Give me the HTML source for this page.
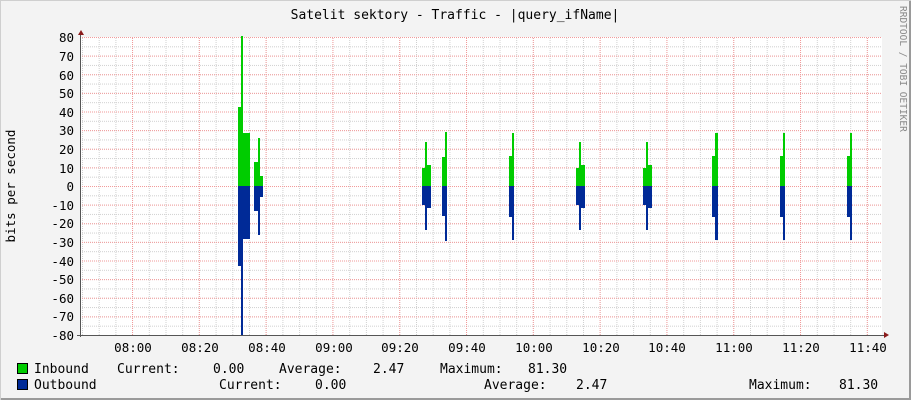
<!DOCTYPE html>
<html><head><meta charset="utf-8"><style>
html,body{margin:0;padding:0;background:#f3f3f3}
svg{display:block}
text{font-family:"DejaVu Sans Mono","Liberation Mono",monospace}
</style></head><body>
<svg width="911" height="400" viewBox="0 0 911 400" xmlns="http://www.w3.org/2000/svg">
<defs>
<pattern id="vmin" patternUnits="userSpaceOnUse" x="82" y="0" width="16.7" height="2"><rect x="0" y="0" width="1" height="1" fill="#d0d0d0"/></pattern>
<pattern id="hmin" patternUnits="userSpaceOnUse" x="0" y="37" width="2" height="9.3125"><rect x="0" y="0" width="1" height="1" fill="#d0d0d0"/></pattern>
<pattern id="vmaj" patternUnits="userSpaceOnUse" x="132" y="0" width="66.8" height="2"><rect x="0" y="0" width="1" height="1" fill="#f29a9a"/></pattern>
<pattern id="hmaj" patternUnits="userSpaceOnUse" x="0" y="37" width="2" height="18.625"><rect x="0" y="0" width="1" height="1" fill="#f29a9a"/></pattern>
</defs>
<rect x="0" y="0" width="911" height="400" fill="#f3f3f3"/>
<rect x="0" y="398" width="911" height="2" fill="#9a9a9a"/>
<rect x="909" y="0" width="2" height="400" fill="#9a9a9a"/>
<rect x="0" y="0" width="911" height="1" fill="#cfcfcf"/>
<rect x="0" y="0" width="1" height="400" fill="#cfcfcf"/>
<text x="455" y="19" font-size="13" text-anchor="middle" fill="#000">Satelit sektory - Traffic - |query_ifName|</text>
<text transform="translate(900,6) rotate(90)" font-size="9.5" fill="#8a8a8a">RRDTOOL / TOBI OETIKER</text>
<rect x="81" y="37" width="801" height="299" fill="#fff"/>
<rect x="81" y="37" width="801" height="299" fill="url(#vmin)"/>
<rect x="81" y="37" width="801" height="299" fill="url(#hmin)"/>
<rect x="81" y="37" width="801" height="299" fill="url(#vmaj)"/>
<rect x="81" y="37" width="801" height="299" fill="url(#hmaj)"/>
<g fill="#00cc00">
<rect x="238" y="107" width="3" height="79"/><rect x="241" y="36" width="2" height="150"/><rect x="243" y="133" width="7" height="53"/>
<rect x="254" y="162" width="4" height="24"/><rect x="258" y="138" width="2" height="48"/><rect x="260" y="176" width="3" height="10"/>
<rect x="422" y="168" width="3" height="18"/><rect x="425" y="142" width="2" height="44"/><rect x="427" y="165" width="4" height="21"/>
<rect x="576" y="168" width="3" height="18"/><rect x="579" y="142" width="2" height="44"/><rect x="581" y="165" width="4" height="21"/>
<rect x="643" y="168" width="3" height="18"/><rect x="646" y="142" width="2" height="44"/><rect x="648" y="165" width="4" height="21"/>
<rect x="442" y="157" width="3" height="29"/><rect x="445" y="132" width="2" height="54"/>
<rect x="509" y="156" width="3" height="30"/><rect x="512" y="133" width="2" height="53"/>
<rect x="712" y="156" width="3" height="30"/><rect x="715" y="133" width="3" height="53"/>
<rect x="780" y="156" width="3" height="30"/><rect x="783" y="133" width="2" height="53"/>
<rect x="847" y="156" width="3" height="30"/><rect x="850" y="133" width="2" height="53"/>
</g>
<g fill="#002a97">
<rect x="238" y="186" width="3" height="80"/><rect x="241" y="186" width="2" height="150"/><rect x="243" y="186" width="7" height="53"/>
<rect x="254" y="186" width="4" height="25"/><rect x="258" y="186" width="2" height="49"/><rect x="260" y="186" width="3" height="11"/>
<rect x="422" y="186" width="3" height="19"/><rect x="425" y="186" width="2" height="44"/><rect x="427" y="186" width="4" height="22"/>
<rect x="576" y="186" width="3" height="19"/><rect x="579" y="186" width="2" height="44"/><rect x="581" y="186" width="4" height="22"/>
<rect x="643" y="186" width="3" height="19"/><rect x="646" y="186" width="2" height="44"/><rect x="648" y="186" width="4" height="22"/>
<rect x="442" y="186" width="3" height="30"/><rect x="445" y="186" width="2" height="55"/>
<rect x="509" y="186" width="3" height="31"/><rect x="512" y="186" width="2" height="54"/>
<rect x="712" y="186" width="3" height="31"/><rect x="715" y="186" width="3" height="54"/>
<rect x="780" y="186" width="3" height="31"/><rect x="783" y="186" width="2" height="54"/>
<rect x="847" y="186" width="3" height="31"/><rect x="850" y="186" width="2" height="54"/>
</g>
<rect x="80" y="35" width="1" height="302" fill="#555"/>
<rect x="77" y="335" width="807" height="1" fill="#555"/>
<polygon points="78,35 84,35 81,30" fill="#8b1a1a"/>
<polygon points="884,332 884,338 889,335" fill="#8b1a1a"/>
<g font-size="12.5" fill="#000" text-anchor="end">
<text x="74" y="42">80</text><text x="74" y="61">70</text><text x="74" y="80">60</text><text x="74" y="98">50</text><text x="74" y="117">40</text><text x="74" y="135">30</text><text x="74" y="154">20</text><text x="74" y="173">10</text><text x="74" y="191">0</text><text x="74" y="210">-10</text><text x="74" y="228">-20</text><text x="74" y="247">-30</text><text x="74" y="266">-40</text><text x="74" y="284">-50</text><text x="74" y="303">-60</text><text x="74" y="321">-70</text><text x="74" y="340">-80</text>
</g>
<text transform="translate(15,186) rotate(-90)" font-size="12.5" text-anchor="middle" fill="#000">bits per second</text>
<g font-size="12.5" fill="#000" text-anchor="middle">
<text x="133" y="352">08:00</text><text x="200" y="352">08:20</text><text x="267" y="352">08:40</text><text x="334" y="352">09:00</text><text x="400" y="352">09:20</text><text x="467" y="352">09:40</text><text x="534" y="352">10:00</text><text x="601" y="352">10:20</text><text x="667" y="352">10:40</text><text x="734" y="352">11:00</text><text x="801" y="352">11:20</text><text x="868" y="352">11:40</text>
</g>
<rect x="17.5" y="363.5" width="10" height="10" fill="#00cc00" stroke="#000"/>
<rect x="17.5" y="379.5" width="10" height="10" fill="#002a97" stroke="#000"/>
<g font-size="13" fill="#000">
<text x="34" y="373">Inbound</text><text x="117" y="373">Current:</text><text x="213" y="373">0.00</text><text x="279" y="373">Average:</text><text x="373" y="373">2.47</text><text x="440" y="373">Maximum:</text><text x="528" y="373">81.30</text>
<text x="34" y="389">Outbound</text><text x="219" y="389">Current:</text><text x="315" y="389">0.00</text><text x="484" y="389">Average:</text><text x="576" y="389">2.47</text><text x="749" y="389">Maximum:</text><text x="839" y="389">81.30</text>
</g>
</svg>
</body></html>
